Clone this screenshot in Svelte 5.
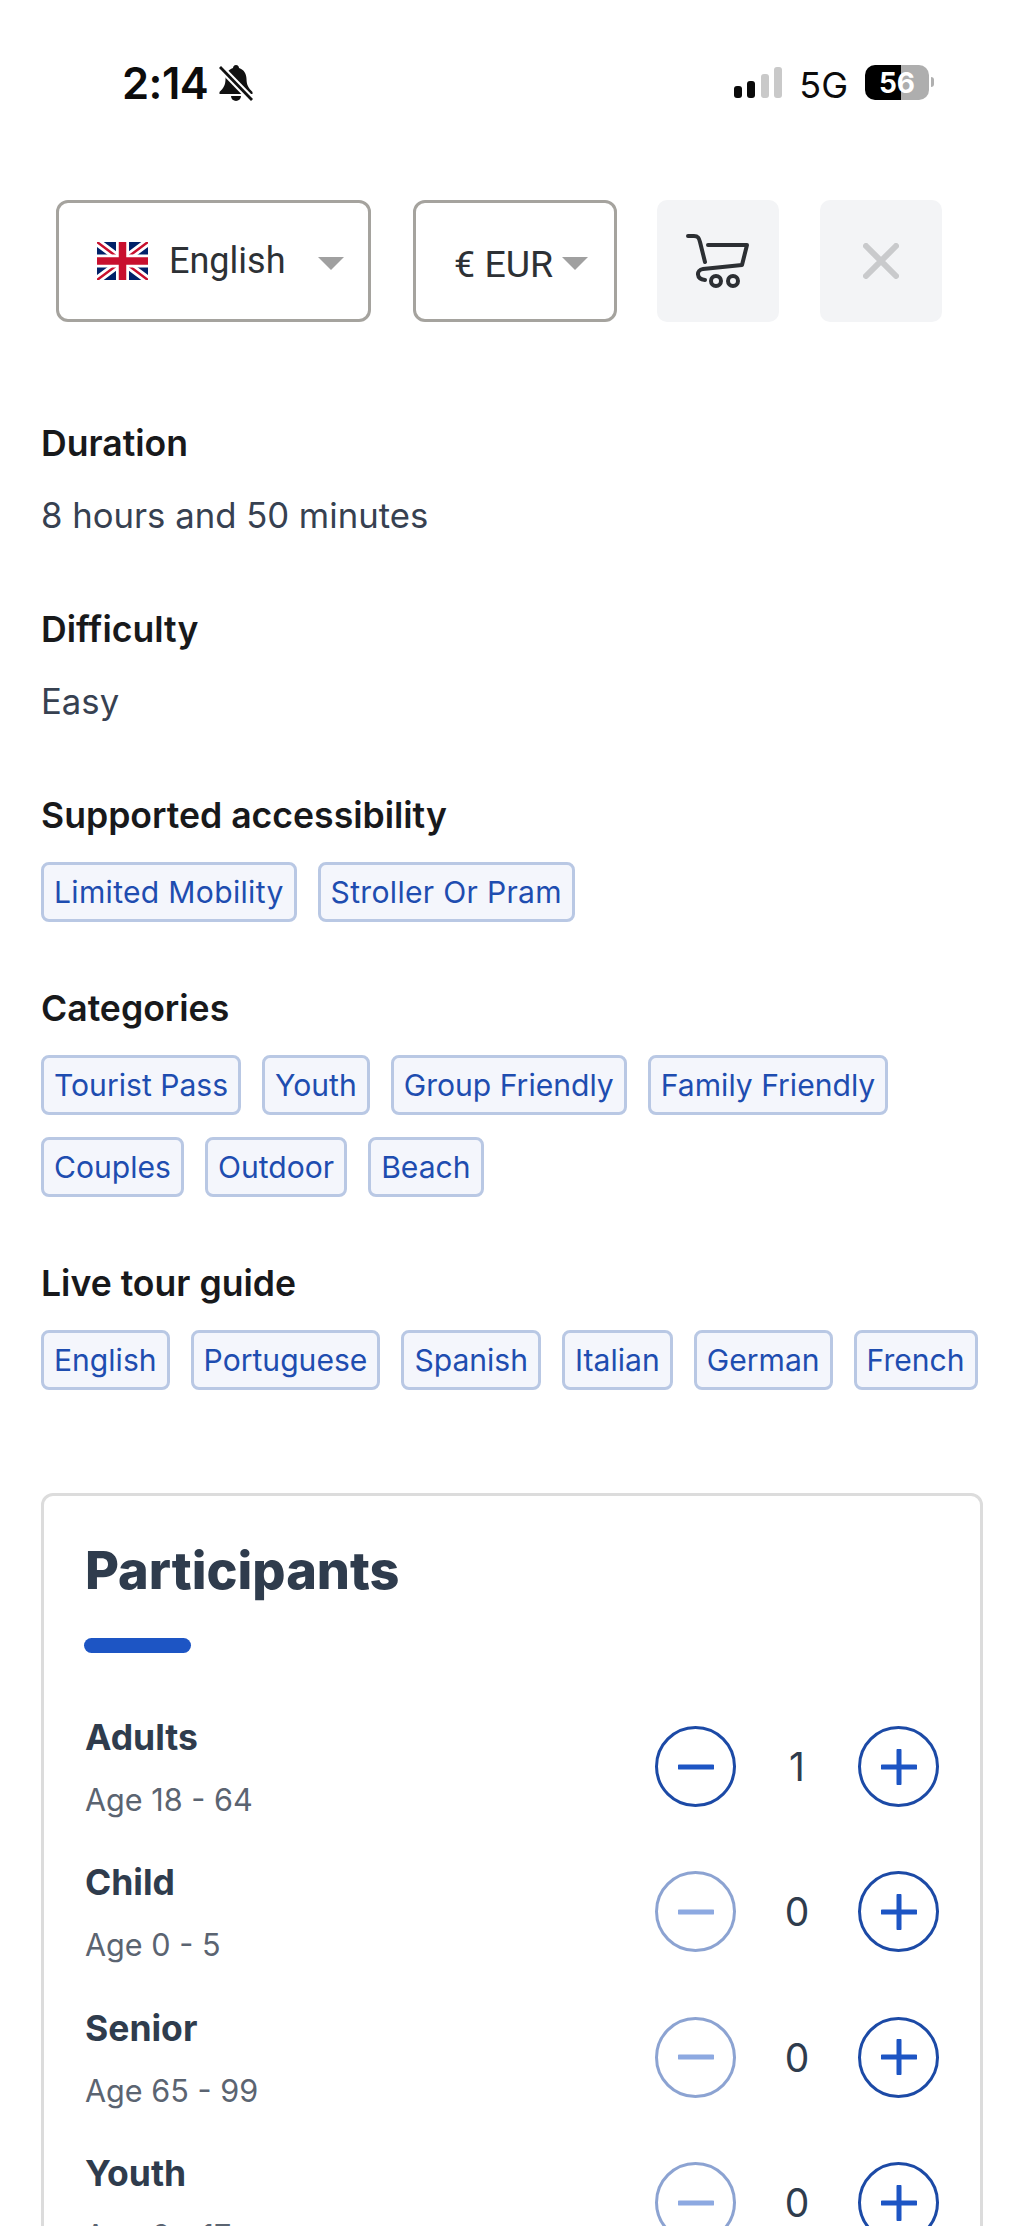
<script>
  const sections = [
    { title: 'Supported accessibility', tags: ['Limited Mobility', 'Stroller Or Pram'] },
    { title: 'Categories', tags: ['Tourist Pass', 'Youth', 'Group Friendly', 'Family Friendly', 'Couples', 'Outdoor', 'Beach'] },
    { title: 'Live tour guide', tags: ['English', 'Portuguese', 'Spanish', 'Italian', 'German', 'French'] }
  ];
  const people = [
    { name: 'Adults', age: 'Age 18 - 64', count: 1 },
    { name: 'Child', age: 'Age 0 - 5', count: 0 },
    { name: 'Senior', age: 'Age 65 - 99', count: 0 },
    { name: 'Youth', age: 'Age 6 - 17', count: 0 }
  ];
</script>

<div class="page">
  <div class="status">
    <div class="left">
      <span class="time">2:14</span>
      <svg class="bell" viewBox="0 0 34 36" width="34" height="36">
        <path d="M17 0c2 0 3 1.500 3 3c5 1.500 7.500 6 7.500 11c0 6 2 9 6 13v2H0.500v-2c4-4 6-7 6-13c0-5 2.500-9.500 7.500-11c0-1.500 1-3 3-3z" fill="#111"/>
        <path d="M12 31h10a5 5 0 0 1-10 0z" fill="#111"/>
        <path d="M1 2l32 33" stroke="#fff" stroke-width="7"/>
        <path d="M1 2l32 33" stroke="#111" stroke-width="2.800"/>
      </svg>
    </div>
    <div class="right">
      <div class="signal"><i class="on b1"></i><i class="on b2"></i><i class="b3"></i><i class="b4"></i></div>
      <span class="net">5G</span>
      <div class="battery"><span>56</span></div>
      <span class="nub"></span>
    </div>
  </div>

  <div class="toolbar">
    <div class="select lang">
      <svg class="flag" viewBox="0 0 51 38" width="51" height="38">
        <rect width="51" height="38" fill="#012169"/>
        <path d="M0 0l51 38M51 0L0 38" stroke="#fff" stroke-width="8"/>
        <path d="M0 0l51 38M51 0L0 38" stroke="#c8102e" stroke-width="2.500"/>
        <path d="M25.500 0v38M0 19h51" stroke="#fff" stroke-width="13"/>
        <path d="M25.500 0v38M0 19h51" stroke="#c8102e" stroke-width="7.500"/>
      </svg>
      <span>English</span>
      <i class="caret"></i>
    </div>
    <div class="select cur">
      <span>€ EUR</span>
      <i class="caret"></i>
    </div>
    <div class="square">
      <svg viewBox="0 0 64 54" width="64" height="54" fill="none" stroke="#2c2f33" stroke-width="4" stroke-linecap="round" stroke-linejoin="round">
        <path d="M2 2h6c4 0 5 2 6 6l5 20"/>
        <path d="M22 11H61L56 31L17 35c-7 1-7 10 2 11"/>
        <circle cx="30" cy="47" r="5"/>
        <circle cx="47" cy="47" r="5"/>
      </svg>
    </div>
    <div class="square">
      <svg viewBox="0 0 36 36" width="36" height="36" stroke="#c9cacc" stroke-width="6" stroke-linecap="round">
        <path d="M3 3l30 30M33 3L3 33"/>
      </svg>
    </div>
  </div>

  <div class="details">
    <section>
      <h3>Duration</h3>
      <p>8 hours and 50 minutes</p>
    </section>
    <section>
      <h3>Difficulty</h3>
      <p>Easy</p>
    </section>
    {#each sections as s}
      <section>
        <h3>{s.title}</h3>
        <div class="tags">
          {#each s.tags as t}<span class="tag">{t}</span>{/each}
        </div>
      </section>
    {/each}
  </div>

  <div class="card">
    <h2>Participants</h2>
    <div class="bar"></div>
    <div class="rows">
      {#each people as p}
        <div class="row">
          <div class="who">
            <div class="name">{p.name}</div>
            <div class="age">{p.age}</div>
          </div>
          <div class="stepper">
            <button class="round" class:off={p.count === 0} aria-label="Decrease">
              <svg viewBox="0 0 36 36" width="36" height="36"><path d="M1.500 18h33" /></svg>
            </button>
            <span class="count">{p.count}</span>
            <button class="round" aria-label="Increase">
              <svg viewBox="0 0 36 36" width="36" height="36"><path d="M1.500 18h33M18 1.500v33" /></svg>
            </button>
          </div>
        </div>
      {/each}
    </div>
  </div>
</div>

<style>
  :global(body) { margin: 0; background: #fff; }
  .page {
    height: 2226px;
    overflow: hidden;
    font-family: Inter, "Noto Sans", sans-serif;
    color: #374151;
    background: #fff;
  }
  .status {
    height: 200px;
    display: flex;
    justify-content: space-between;
    box-sizing: border-box;
    padding: 58px 0 0 122px;
  }
  .left { display: flex; align-items: flex-start; gap: 11px; }
  .time { font-size: 43.500px; line-height: 50px; font-weight: 600; color: #0c0c0c; letter-spacing: -0.5px; }
  .bell { margin-top: 7px; }
  .right { display: flex; align-items: flex-start; margin-right: 90px; position: relative; }
  .signal { display: flex; align-items: flex-end; gap: 5.500px; height: 32px; margin-top: 8px; }
  .signal i { width: 8px; background: #c9c9c9; border-radius: 3px; display: block; }
  .signal i.on { background: #0a0a0a; }
  .b1 { height: 12px; }
  .b2 { height: 17px; }
  .b3 { height: 24px; }
  .b4 { height: 31px; }
  .net { font-size: 36px; line-height: 44px; margin: 5px 17px 0 17px; color: #0c0c0c; font-weight: 400; }
  .battery {
    width: 64px; height: 35px; border-radius: 10px; margin-top: 7px;
    background: linear-gradient(90deg, #000 0 56%, #aeaeae 56% 100%);
    display: flex; align-items: center; justify-content: center;
    color: #fff; font-size: 28px; font-weight: 700;
  }
  .nub { width: 3px; height: 10px; background: #b0b0b0; border-radius: 0 3px 3px 0; margin: 19px 0 0 2px; }

  .toolbar { display: flex; padding-left: 56px; height: 122px; }
  .select {
    box-sizing: border-box;
    height: 122px;
    border: 3px solid #a5a39e;
    border-radius: 12px;
    display: flex;
    align-items: center;
    color: #2d3135;
    font-family: Roboto, Inter, sans-serif;
  }
  .lang { width: 315px; padding-left: 38px; margin-right: 42px; font-size: 36px; }
  .lang span { margin-left: 21px; }
  .lang .caret { margin-left: 33px; }
  .cur { width: 204px; padding-left: 38px; margin-right: 40px; font-size: 37.500px; }
  .cur span { margin-top: 6px; }
  .cur .caret { margin-left: 9px; }
  .caret {
    display: block;
    margin-top: 4px;
    width: 0; height: 0;
    border-left: 13px solid transparent;
    border-right: 13px solid transparent;
    border-top: 13px solid #a0a0a0;
  }
  .square {
    box-sizing: border-box;
    width: 122px; height: 122px; margin-right: 41px;
    border-radius: 10px;
    background: #f3f4f6;
    display: flex; align-items: center; justify-content: center;
  }

  .details { padding: 0 41px; margin-top: 100px; }
  section { padding-bottom: 65px; }
  h3 { margin: 0 0 24px; font-size: 35.600px; line-height: 44px; font-weight: 600; color: #18191b; }
  p { margin: 0 0 3px; font-size: 34.700px; line-height: 50px; color: #374151; }
  .tags { display: flex; flex-wrap: wrap; gap: 22px 21px; }
  .tag {
    box-sizing: border-box;
    height: 60px;
    padding: 0 10px;
    display: flex; align-items: center;
    background: #f4f6fc;
    border: 3px solid #b9c8e4;
    border-radius: 8px;
    color: #1e4db0;
    font-size: 30.100px;
  }
  section:nth-of-type(3) .tag { letter-spacing: 0.3px; }

  .card {
    margin: 38px 41px 0;
    box-sizing: border-box;
    height: 900px;
    padding: 39px 41px;
    border: 3px solid #dcdcdc;
    border-radius: 12px;
  }
  h2 { margin: 0; font-size: 52.200px; line-height: 70px; font-weight: 800; color: #2f3c4d; }
  .bar { width: 107px; height: 15px; border-radius: 8px; background: #1d55c4; margin: 33px 0 0 -1px; }
  .rows { margin-top: 63px; }
  .row { display: flex; justify-content: space-between; height: 145.400px; }
  .name { font-size: 35.500px; line-height: 44px; font-weight: 700; color: #2f3c4d; }
  .age { font-size: 30.600px; line-height: 40px; color: #5b6471; margin-top: 20px; }
  .stepper { display: flex; align-items: flex-start; padding-top: 10px; }
  .round {
    box-sizing: border-box;
    width: 81px; height: 81px;
    border: 3px solid #1c4aa6;
    border-radius: 50%;
    background: #fff;
    padding: 0;
    display: flex; align-items: center; justify-content: center;
  }
  .round path { stroke: #1d55c4; stroke-width: 5; stroke-linecap: round; fill: none; }
  .round.off { opacity: 0.5; }
  .count { width: 122px; text-align: center; font-size: 39px; line-height: 81px; color: #2f3c4d; }
</style>
